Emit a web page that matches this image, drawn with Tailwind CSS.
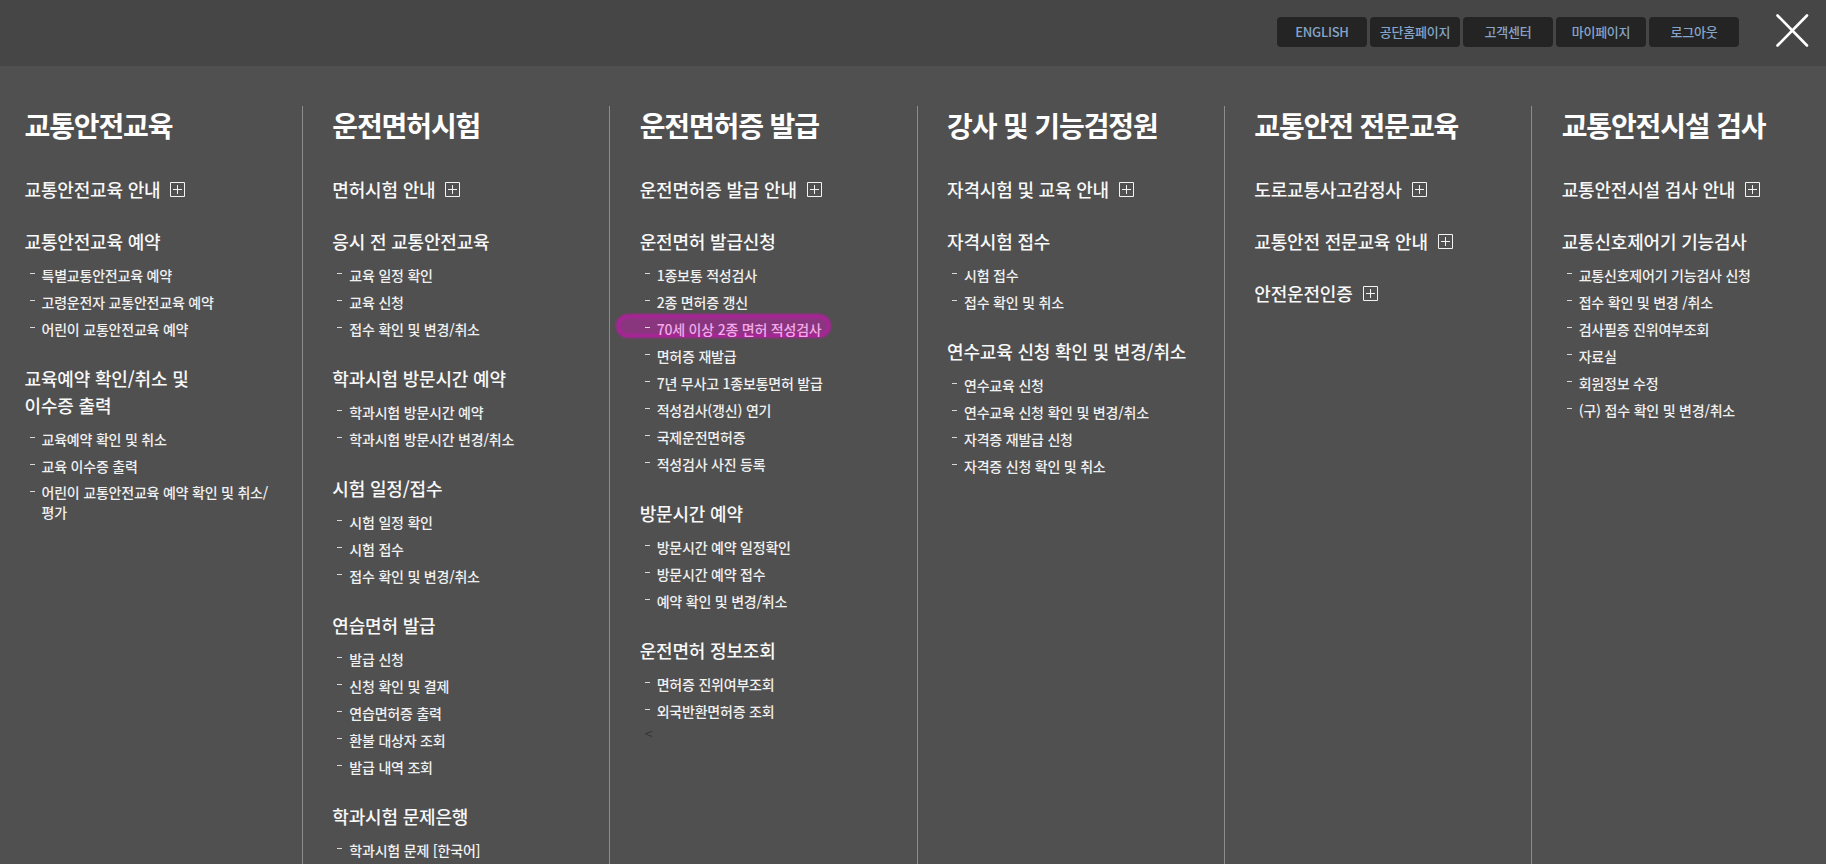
<!DOCTYPE html>
<html lang="ko">
<head>
  <meta charset="UTF-8">
  <meta name="viewport" content="width=device-width, initial-scale=1.0">
  <title>전체메뉴</title>
  <script src="https://cdn.jsdelivr.net/npm/@tailwindcss/browser@4"></script>
</head>
<body class="h-screen overflow-hidden bg-[#505050] font-['Noto_Sans_CJK_KR',sans-serif] text-white">

  <!-- 상단 메뉴 -->
  <header class="flex h-[66px] items-start justify-end bg-[#464646] pr-4">
    <nav class="mt-[17px] flex gap-[3px] text-[13px] font-medium leading-[30px] tracking-[-0.25px] text-[#86a4c8]">
      <a class="h-[30px] w-[90px] rounded bg-[#242424] text-center">ENGLISH</a>
      <a class="h-[30px] w-[90px] rounded bg-[#242424] text-center">공단홈페이지</a>
      <a class="h-[30px] w-[90px] rounded bg-[#242424] text-center">고객센터</a>
      <a class="h-[30px] w-[90px] rounded bg-[#242424] text-center">마이페이지</a>
      <a class="h-[30px] w-[90px] rounded bg-[#242424] text-center">로그아웃</a>
    </nav>
    <button class="mt-[13px] ml-[35px] h-9 w-9" aria-label="닫기">
      <svg class="h-9 w-9" viewBox="0 0 36 36" fill="none" stroke="#fff" stroke-width="2.6" stroke-linecap="round"><path d="M3.500 2.500L33 32.500M33 2.500L3.500 32.500"/></svg>
    </button>
  </header>

  <svg class="hidden">
    <symbol id="plus" viewBox="0 0 15 15"><path d="M.5.5h14v14H.5zM7.500 3v9M3 7.500h9" fill="none" stroke="#f2f2f2"/></symbol>
  </svg>

  <!-- 전체 메뉴 -->
  <main class="mt-10 grid h-[758px] w-[1844px] -ml-[5.5px] grid-cols-6 [&>section]:border-l [&>section]:border-[#8c8c8c] [&>section]:pl-[29.5px] [&>section:first-child]:border-transparent [&>section:first-child]:pl-[29px] [&_h2]:-mt-px [&_h2]:mb-[31px] [&_h2]:text-[28px] [&_h2]:font-bold [&_h2]:leading-[40px] [&_h2]:tracking-[-1.12px] [&_h3]:mb-[25px] [&_h3]:flex [&_h3]:items-center [&_h3]:text-[18px] [&_h3]:font-medium [&_h3]:leading-[27px] [&_h3]:tracking-[-0.18px] [&_h3]:text-[#f8f8f8] [&_h3>svg]:ml-2.5 [&_h3>svg]:size-[15px] [&_h3:has(+ul)]:mb-[7px] [&_ul]:mb-[22px] [&_ul]:pl-[5px] [&_li]:relative [&_li]:flex [&_li]:text-sm [&_li]:font-medium [&_li]:leading-[27px] [&_li]:tracking-[-0.21px] [&_li]:text-[#f0f0f0] [&_li]:before:mt-[11px] [&_li]:before:mr-[7px] [&_li]:before:h-px [&_li]:before:w-[5px] [&_li]:before:shrink-0 [&_li]:before:bg-[#d8d8d8]">
    <section>
      <h2>교통안전교육</h2>
      <h3>교통안전교육 안내 <svg><use href="#plus"/></svg></h3>
      <h3>교통안전교육 예약</h3>
      <ul>
        <li>특별교통안전교육 예약</li>
        <li>고령운전자 교통안전교육 예약</li>
        <li>어린이 교통안전교육 예약</li>
      </ul>
      <h3>교육예약 확인/취소 및<br>이수증 출력</h3>
      <ul>
        <li>교육예약 확인 및 취소</li>
        <li>교육 이수증 출력</li>
        <li><span class="mt-[2px] leading-[20px]">어린이 교통안전교육 예약 확인 및 취소/<br>평가</span></li>
      </ul>
    </section>

    <section>
      <h2>운전면허시험</h2>
      <h3>면허시험 안내 <svg><use href="#plus"/></svg></h3>
      <h3>응시 전 교통안전교육</h3>
      <ul>
        <li>교육 일정 확인</li>
        <li>교육 신청</li>
        <li>접수 확인 및 변경/취소</li>
      </ul>
      <h3>학과시험 방문시간 예약</h3>
      <ul>
        <li>학과시험 방문시간 예약</li>
        <li>학과시험 방문시간 변경/취소</li>
      </ul>
      <h3>시험 일정/접수</h3>
      <ul>
        <li>시험 일정 확인</li>
        <li>시험 접수</li>
        <li>접수 확인 및 변경/취소</li>
      </ul>
      <h3>연습면허 발급</h3>
      <ul>
        <li>발급 신청</li>
        <li>신청 확인 및 결제</li>
        <li>연습면허증 출력</li>
        <li>환불 대상자 조회</li>
        <li>발급 내역 조회</li>
      </ul>
      <h3>학과시험 문제은행</h3>
      <ul>
        <li>학과시험 문제 [한국어]</li>
      </ul>
    </section>

    <section>
      <h2>운전면허증 발급</h2>
      <h3>운전면허증 발급 안내 <svg><use href="#plus"/></svg></h3>
      <h3>운전면허 발급신청</h3>
      <ul>
        <li>1종보통 적성검사</li>
        <li>2종 면허증 갱신</li>
        <li class="isolate">
          <span class="text-[#f5a8ea]">70세 이상 2종 면허 적성검사</span>
          <span class="absolute -top-[2px] -left-[29px] -z-10 h-6 w-[215px] rounded-full border-4 border-[#ac2299] bg-[#89367f] blur-[0.8px]"></span>
        </li>
        <li>면허증 재발급</li>
        <li>7년 무사고 1종보통면허 발급</li>
        <li>적성검사(갱신) 연기</li>
        <li>국제운전면허증</li>
        <li>적성검사 사진 등록</li>
      </ul>
      <h3>방문시간 예약</h3>
      <ul>
        <li>방문시간 예약 일정확인</li>
        <li>방문시간 예약 접수</li>
        <li>예약 확인 및 변경/취소</li>
      </ul>
      <h3>운전면허 정보조회</h3>
      <ul>
        <li>면허증 진위여부조회</li>
        <li>외국반환면허증 조회</li>
        <p class="text-sm leading-[17px] text-[#333]">&lt;</p>
      </ul>
    </section>

    <section>
      <h2>강사 및 기능검정원</h2>
      <h3>자격시험 및 교육 안내 <svg><use href="#plus"/></svg></h3>
      <h3>자격시험 접수</h3>
      <ul>
        <li>시험 접수</li>
        <li>접수 확인 및 취소</li>
      </ul>
      <h3>연수교육 신청 확인 및 변경/취소</h3>
      <ul>
        <li>연수교육 신청</li>
        <li>연수교육 신청 확인 및 변경/취소</li>
        <li>자격증 재발급 신청</li>
        <li>자격증 신청 확인 및 취소</li>
      </ul>
    </section>

    <section>
      <h2>교통안전 전문교육</h2>
      <h3>도로교통사고감정사 <svg><use href="#plus"/></svg></h3>
      <h3>교통안전 전문교육 안내 <svg><use href="#plus"/></svg></h3>
      <h3>안전운전인증 <svg><use href="#plus"/></svg></h3>
    </section>

    <section>
      <h2>교통안전시설 검사</h2>
      <h3>교통안전시설 검사 안내 <svg><use href="#plus"/></svg></h3>
      <h3>교통신호제어기 기능검사</h3>
      <ul>
        <li>교통신호제어기 기능검사 신청</li>
        <li>접수 확인 및 변경 /취소</li>
        <li>검사필증 진위여부조회</li>
        <li>자료실</li>
        <li>회원정보 수정</li>
        <li>(구) 접수 확인 및 변경/취소</li>
      </ul>
    </section>
  </main>

</body>
</html>
